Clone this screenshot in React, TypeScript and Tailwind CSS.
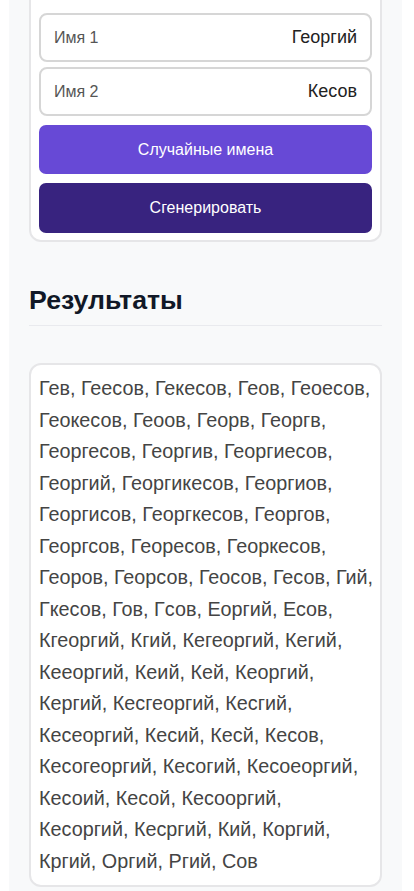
import React from "react";

const results =
  "Гев, Геесов, Гекесов, Геов, Геоесов, Геокесов, Геоов, Георв, Георгв, Георгесов, Георгив, Георгиесов, Георгий, Георгикесов, Георгиов, Георгисов, Георгкесов, Георгов, Георгсов, Георесов, Георкесов, Георов, Георсов, Геосов, Гесов, Гий, Гкесов, Гов, Гсов, Еоргий, Есов, Кгеоргий, Кгий, Кегеоргий, Кегий, Кееоргий, Кеий, Кей, Кеоргий, Кергий, Кесгеоргий, Кесгий, Кесеоргий, Кесий, Кесй, Кесов, Кесогеоргий, Кесогий, Кесоеоргий, Кесоий, Кесой, Кесооргий, Кесоргий, Кесргий, Кий, Коргий, Кргий, Оргий, Ргий, Сов";

function Field({ label, value }: { label: string; value: string }) {
  return (
    <div className="flex h-[49px] items-center justify-between rounded-[8px] border-2 border-[#d6d6d6] bg-white px-[13px]">
      <span className="text-[16px] text-[#555]">{label}</span>
      <span className="text-[18px] text-[#222]">{value}</span>
    </div>
  );
}

export default function App() {
  return (
    <div
      className="min-h-screen overflow-hidden bg-white"
      style={{ fontFamily: '"Liberation Sans", Arial, sans-serif' }}
    >
      <div className="ml-[9px] w-[393px] bg-[#f8f9fa] px-[20px] pb-[10px]">
        <div className="mt-[-20px] rounded-[12px] border-2 border-[#e6e6e8] bg-white px-[8px] pt-[31px] pb-[7px]">
          <div className="flex flex-col gap-[5px]">
            <Field label="Имя 1" value="Георгий" />
            <Field label="Имя 2" value="Кесов" />
          </div>
          <div className="mt-[9px] flex flex-col gap-[9px]">
            <button className="h-[49px] w-full rounded-[7px] bg-[#6749d6] text-[16px] text-white">
              Случайные имена
            </button>
            <button className="h-[50px] w-full rounded-[7px] bg-[#38237f] text-[16px] text-white">
              Сгенерировать
            </button>
          </div>
        </div>

        <div className="mt-[43px] border-b border-[#e9eaee] pb-[9px]">
          <h2 className="text-[26.7px] font-bold leading-[31px] text-[#111827]">Результаты</h2>
        </div>

        <div className="mt-[37px] rounded-[12px] border-2 border-[#e6e6e8] bg-white py-[8px] pl-[8px] pr-[6px]">
          <p className="text-[19.8px] leading-[31.5px] text-[#444]">{results}</p>
        </div>
      </div>
    </div>
  );
}
